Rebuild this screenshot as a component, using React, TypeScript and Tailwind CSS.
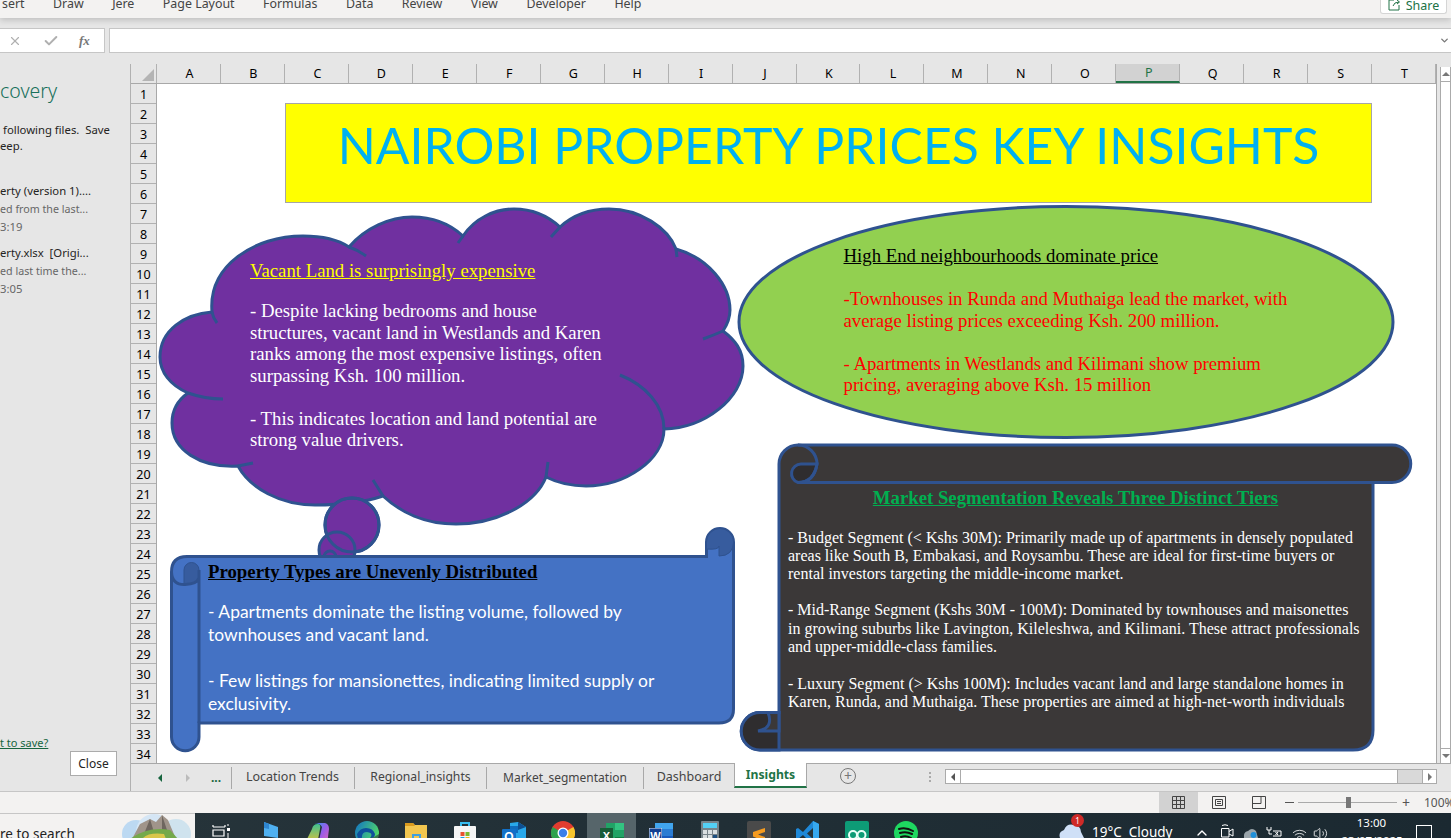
import { X, Check, ChevronDown, ChevronUp, Volume2, Wifi } from "lucide-react";

const ribbonTabs = ["sert", "Draw", "Jere", "Page Layout", "Formulas", "Data", "Review", "View", "Developer", "Help"];
const columns = "ABCDEFGHIJKLMNOPQRST".split("");
const rows = Array.from({ length: 34 }, (_, i) => i + 1);

function Cloud() {
  return (
    <g fill="#7030a0" stroke="#2f528f" strokeWidth="3">
      <path d="M212 312 C208 265 255 236 303 236 C320 236 337 239 349 247 C365 228 390 217 412 217 C432 217 450 224 463 236 C475 218 495 209 514 209 C532 209 548 216 560 227 C573 215 590 209 609 209 C640 209 668 228 676 249 C708 258 730 285 730 310 C730 318 727 325 723 331 C735 340 743 350 743 366 C743 398 705 428 664 429 C664 460 625 486 586 486 C570 486 556 482 546 477 C535 505 495 524 456 524 C425 524 400 512 383 496 C362 503 338 505 315 505 C280 505 250 488 238 466 C200 468 172 450 172 423 C172 410 178 400 188 393 C170 385 160 372 160 357 C160 330 185 314 212 312 Z" />
      <path
        fill="none"
        d="M212 312 Q213 318 217 323 M349 247 Q358 250 366 256 M463 236 L458 243 M560 227 L551 237 M676 249 L677 257 M723 331 Q714 335 703 339 M664 429 C664 405 645 385 620 375 M546 477 L548 462 M383 496 L373 480 M238 466 L253 463 M188 393 Q205 399 223 399"
      />
      <circle cx="352" cy="525" r="27" />
      <circle cx="337" cy="550" r="18" />
      <circle cx="352" cy="525" r="27" fill="none" />
      <circle cx="330" cy="557" r="6" />
    </g>
  );
}

function BlueScroll() {
  return (
    <g stroke="#2f528f" strokeWidth="3">
      <path
        fill="#4472c4"
        d="M171.500 572 Q171.500 556.500 187 556.500 L706.500 556.500 L706.500 542 A13.500 13.500 0 0 1 733.500 542 L733.500 709 Q733.500 723 719 723 L199 723 L199 737 A13.750 13.750 0 0 1 171.500 737 Z"
      />
      <path fill="#375c9e" strokeWidth="1" d="M706.500 549 L706.500 542 A13.500 13.500 0 0 1 733.500 542 Q733 556 719 556 L719 546 Q719 550 706.500 549 Z" />
      <path fill="#375c9e" strokeWidth="1" d="M199 578 L199 570 A7.500 7.500 0 0 0 184 570 L184 584.500 Q197 584 199 578 Z" />
      <path fill="none" d="M171.500 572 Q172 585 185 584.500 Q197 584 199 578 M199 570 L199 723" />
    </g>
  );
}

function DarkScroll() {
  return (
    <g stroke="#2f528f" strokeWidth="3">
      <path
        fill="#3b3838"
        d="M779 464 A19 19 0 0 1 798 445 L1392 445 A18.750 18.750 0 0 1 1392 482.500 L1373 482.500 L1373 730 Q1373 750 1353 750 L760 750 A18.750 18.750 0 0 1 760 712.500 L779 712.500 Z"
      />
      <path fill="#2f2d2f" d="M817 464 L801 464 A9.500 9.500 0 0 0 798 482.500 Q814 482.500 817 464 Z" />
      <path fill="none" d="M798 445 A19 19 0 0 1 817 464 Q814 482.500 798 482.500 L1373 482.500" />
      <path fill="#2f2d2f" d="M779 712.500 L760 712.500 A18.750 18.750 0 0 0 760 750 L779 750 Z" />
      <path fill="#3b3838" d="M768 712.500 L779 712.500 L779 731 L758 731 Q774 728 768 712.500 Z" />
    </g>
  );
}

function TaskIcon({ children, active }: { children: React.ReactNode; active?: boolean }) {
  return (
    <div className={`flex h-full w-[49px] justify-center pt-[8px] ${active ? "bg-[#56656a]" : ""}`}>
      <svg width="24" height="24" viewBox="0 0 24 24">
        {children}
      </svg>
    </div>
  );
}

export default function App() {
  return (
    <div className="flex h-[838px] w-[1451px] flex-col overflow-hidden bg-[#e6e6e6] font-['Noto_Sans',sans-serif] text-[12px] text-[#252423]">
      {/* ribbon, cut off at the top of the window */}
      <div className="relative z-10 flex h-[18px] shrink-0 justify-between bg-[#f3f2f1] shadow-[0_2px_6px_rgba(0,0,0,0.18)]">
        <div className="ml-[2px] flex -mt-[5px] h-[18px] gap-[28.500px] text-[12.400px] leading-[18px] text-[#444]">
          {ribbonTabs.map((t) => (
            <span key={t}>{t}</span>
          ))}
        </div>
        <div className="mr-[4px] flex h-[14px] w-[67px] items-end justify-center gap-[5px] rounded-b-[3px] border border-t-0 border-[#d5d5d5] bg-white text-[12.500px] leading-[18px] text-[#217346]">
          <svg width="13" height="12" viewBox="0 0 13 12" fill="none" stroke="#217346" className="mb-[2px]">
            <path d="M6 1H1V11H11V6M5 7Q6 3 11 3M9 1L11.500 3L9 5" />
          </svg>
          <span className="-mb-[1px] h-[13px] overflow-hidden leading-[9px]">Share</span>
        </div>
      </div>

      {/* formula bar */}
      <div className="flex h-[46px] shrink-0 items-start gap-[4px] pt-[10px]">
        <div className="flex h-[25px] w-[105px] items-center border border-l-0 border-[#c6c6c6] bg-white text-[#b0b0b0]">
          <X size={14} className="ml-[8px]" />
          <Check size={16} className="ml-[21px]" strokeWidth={3} />
          <span className="ml-[20px] font-['Liberation_Serif',serif] text-[13px] italic font-bold text-[#777]">fx</span>
        </div>
        <div className="flex h-[25px] flex-1 items-center justify-end border border-r-0 border-[#c6c6c6] bg-white pr-[1px]">
          <ChevronDown size={11} strokeWidth={3} className="text-[#777]" />
        </div>
      </div>

      <div className="flex min-h-0 flex-1">
        {/* recovery pane */}
        <div className="flex w-[131px] shrink-0 flex-col border-r border-[#b1b1b1] text-[11.300px] leading-[16px]">
          <div className="mt-[13px] h-[28px] text-[19.500px] font-light leading-[28px] text-[#17705b]">covery</div>
          <div className="mt-[17px] pl-[3px]">
            following files.&nbsp; Save
            <br />
            <span className="-ml-[3px]">eep.</span>
          </div>
          <div className="mt-[28px] leading-[18px]">
            <div>erty (version 1)....</div>
            <div className="text-[10.700px] text-[#666]">ed from the last...</div>
            <div className="text-[#666]">3:19</div>
          </div>
          <div className="mt-[8px] leading-[18px]">
            <div>erty.xlsx&nbsp; [Origi...</div>
            <div className="text-[10.700px] text-[#666]">ed last time the...</div>
            <div className="text-[#666]">3:05</div>
          </div>
          <div className="mt-auto text-[11px] leading-[14px] text-[#17653f] underline">t to save?</div>
          <div className="mb-[15px] ml-[70px] mt-[1px] flex h-[25px] w-[47px] items-center justify-center border border-[#ababab] bg-white text-[12px]">
            Close
          </div>
        </div>

        <div className="flex min-w-0 flex-1 flex-col">
          <div className="flex min-h-0 flex-1">
            <div className="flex w-[1306px] shrink-0 flex-col border-r border-[#a8a8a8]">
              {/* column headers */}
              <div className="flex h-[20px] shrink-0 border-b border-[#a8a8a8] text-[12.500px]">
                <div className="flex w-[26px] items-end justify-end border-r border-[#b1b1b1] p-[2px]">
                  <div className="h-0 w-0 border-b-[12px] border-l-[12px] border-b-[#b4b4b4] border-l-transparent" />
                </div>
                {columns.map((c) => (
                  <div
                    key={c}
                    className={
                      c === "P"
                        ? "flex w-[64px] items-center justify-center border-r border-b-2 border-[#b1b1b1] border-b-[#217346] bg-[#d2d2d2] pl-[2px] pt-[1px] text-[#217346]"
                        : "flex w-[64px] items-center justify-center border-r border-[#b1b1b1] pl-[2px] pt-[1px] text-black"
                    }
                  >
                    {c}
                  </div>
                ))}
              </div>
              <div className="flex min-h-0 flex-1">
                {/* row headers */}
                <div className="w-[26px] shrink-0 border-r border-[#a8a8a8] text-[12.500px] text-black">
                  {rows.map((r) => (
                    <div key={r} className="flex h-[20px] items-center justify-center border-b border-[#b1b1b1] pt-[3px]">
                      {r}
                    </div>
                  ))}
                </div>

                {/* sheet with its floating shapes */}
                <div className="relative flex-1 overflow-hidden bg-white">
                  <div className="absolute left-[128px] top-[19px] flex h-[100px] w-[1087px] items-center justify-center border border-[#a6a6a6] bg-[#ffff00] pb-[16px] font-['Lato',sans-serif] text-[49.900px] leading-[60px] text-[#00b0f0]">
                    NAIROBI PROPERTY PRICES KEY INSIGHTS
                  </div>
                  <svg className="absolute left-0 top-0" width="1280" height="680" viewBox="157 84 1280 680">
                    <Cloud />
                    <ellipse cx="1066" cy="322" rx="327" ry="115.500" fill="#92d050" stroke="#2f528f" strokeWidth="3" />
                    <BlueScroll />
                    <DarkScroll />
                  </svg>

                  <div className="absolute left-[93px] top-[176px] whitespace-nowrap font-['Liberation_Serif',serif] text-[18.750px] leading-[21.400px] text-white">
                    <p className="mb-[19px] text-[#ffff00] underline">Vacant Land is surprisingly expensive</p>
                    <p>
                      - Despite lacking bedrooms and house
                      <br />
                      structures, vacant land in Westlands and Karen
                      <br />
                      ranks among the most expensive listings, often
                      <br />
                      surpassing Ksh. 100 million.
                    </p>
                    <p className="mt-[21.500px]">
                      - This indicates location and land potential are
                      <br />
                      strong value drivers.
                    </p>
                  </div>

                  <div className="absolute left-[686.500px] top-[161px] whitespace-nowrap font-['Liberation_Serif',serif] text-[18.750px] leading-[21.500px] text-[#ff0000]">
                    <p className="mb-[21.500px] text-black underline">High End neighbourhoods dominate price</p>
                    <p>
                      -Townhouses in Runda and Muthaiga lead the market, with
                      <br />
                      average listing prices exceeding Ksh. 200 million.
                    </p>
                    <p className="mt-[21.500px]">
                      - Apartments in Westlands and Kilimani show premium
                      <br />
                      pricing, averaging above Ksh. 15 million
                    </p>
                  </div>

                  <div className="absolute left-[51px] top-[477px] whitespace-nowrap text-white">
                    <p className="mb-[18px] font-['Liberation_Serif',serif] text-[18.800px] font-bold leading-[22px] text-black underline">
                      Property Types are Unevenly Distributed
                    </p>
                    <div className="font-['Lato',sans-serif] text-[17.450px] leading-[22.700px]">
                      <p>
                        - Apartments dominate the listing volume, followed by
                        <br />
                        townhouses and vacant land.
                      </p>
                      <p className="mt-[23.500px]">
                        - Few listings for mansionettes, indicating limited supply or
                        <br />
                        exclusivity.
                      </p>
                    </div>
                  </div>

                  <div className="absolute left-[631px] top-[403px] w-[575px] whitespace-nowrap font-['Liberation_Serif',serif] text-[16px] leading-[18.400px] text-white">
                    <p className="mb-[19.500px] text-center text-[18.750px] font-bold leading-[22px] text-[#00b050] underline">
                      Market Segmentation Reveals Three Distinct Tiers
                    </p>
                    <p>
                      - Budget Segment (&lt; Kshs 30M): Primarily made up of apartments in densely populated
                      <br />
                      areas like South B, Embakasi, and Roysambu. These are ideal for first-time buyers or
                      <br />
                      rental investors targeting the middle-income market.
                    </p>
                    <p className="mt-[17.500px]">
                      - Mid-Range Segment (Kshs 30M - 100M): Dominated by townhouses and maisonettes
                      <br />
                      in growing suburbs like Lavington, Kileleshwa, and Kilimani. These attract professionals
                      <br />
                      and upper-middle-class families.
                    </p>
                    <p className="mt-[18.400px]">
                      - Luxury Segment (&gt; Kshs 100M): Includes vacant land and large standalone homes in
                      <br />
                      Karen, Runda, and Muthaiga. These properties are aimed at high-net-worth individuals
                    </p>
                  </div>
                </div>
              </div>
            </div>

            {/* vertical scrollbar */}
            <div className="ml-[3px] mt-[3px] flex flex-1 flex-col justify-between border-x border-[#ababab] bg-white">
              <div className="flex h-[15px] items-center justify-center border-b border-[#ababab]">
                <div className="h-0 w-0 border-x-[4px] border-b-[4px] border-x-transparent border-b-[#777]" />
              </div>
              <div className="flex h-[15px] items-center justify-center border-t border-[#ababab]">
                <div className="h-0 w-0 border-x-[4px] border-t-[4px] border-x-transparent border-t-[#777]" />
              </div>
            </div>
          </div>

          {/* sheet tabs */}
          <div className="flex h-[28px] shrink-0 border-t border-[#a8a8a8] text-[12.500px] text-[#444]">
            <div className="mt-[3px] flex h-[22px] w-[101px] shrink-0 items-center border-r border-[#a8a8a8]">
              <div className="ml-[27px] h-0 w-0 border-y-[4px] border-r-[4px] border-y-transparent border-r-[#17653f]" />
              <div className="ml-[24px] h-0 w-0 border-y-[4px] border-l-[4px] border-y-transparent border-l-[#bbb]" />
              <div className="ml-[21px] text-[12px] font-bold leading-[16px] text-[#17653f]">...</div>
            </div>
            <div className="mt-[3px] flex h-[22px] w-[123px] items-center justify-center border-r border-[#a8a8a8] pb-[1px] pr-[1px]">Location Trends</div>
            <div className="mt-[3px] flex h-[22px] w-[132px] items-center justify-center border-r border-[#a8a8a8] pb-[1px] text-[12.200px]">Regional_insights</div>
            <div className="mt-[3px] flex h-[22px] w-[157px] items-center justify-center border-r border-[#a8a8a8] pb-[1px] text-[12px]">Market_segmentation</div>
            <div className="mt-[3px] flex h-[22px] w-[90px] items-center justify-center pb-[1px]">Dashboard</div>
            <div className="-mt-px flex h-[25px] w-[73px] items-center justify-center border-x border-b-2 border-x-[#a8a8a8] border-b-[#217346] bg-white pt-[2px] text-[12.200px] font-bold text-[#217346]">
              Insights
            </div>
            <div className="ml-[33px] mt-[4px] flex h-[16px] w-[16px] items-center justify-center rounded-full border border-[#777] text-[14px] leading-none text-[#777]">
              +
            </div>
            <div className="ml-[73px] mt-[8px] h-[10px] border-l-2 border-dotted border-[#aaa]" />
            <div className="ml-[14px] mt-[5px] flex h-[15px] w-[492px] border border-[#ababab] bg-[#d9d9d9]">
              <div className="flex w-[15px] items-center justify-center border-r border-[#ababab] bg-white">
                <div className="h-0 w-0 border-y-[4px] border-r-[4px] border-y-transparent border-r-[#555]" />
              </div>
              <div className="w-[437px] border-r border-[#ababab] bg-white" />
              <div className="flex-1" />
              <div className="flex w-[14px] items-center justify-center border-l border-[#ababab] bg-white">
                <div className="h-0 w-0 border-y-[4px] border-l-[4px] border-y-transparent border-l-[#777]" />
              </div>
            </div>
          </div>
        </div>
      </div>

      {/* status bar */}
      <div className="flex h-[22px] shrink-0 items-center border-t border-[#c6c6c6] bg-[#f3f2f1] text-[#555]">
        <div className="ml-[1159px] flex h-full w-[39px] items-center justify-center bg-[#d2d2d2]">
          <svg width="13" height="13" viewBox="0 0 13 13" fill="none" stroke="#444">
            <path d="M.5 .5H12.500V12.500H.5ZM.5 4.500H12.500M.5 8.500H12.500M4.500 .5V12.500M8.500 .5V12.500" />
          </svg>
        </div>
        <div className="flex w-[42px] justify-center">
          <svg width="14" height="13" viewBox="0 0 14 13" fill="none" stroke="#444">
            <path d="M.5 .5H13.500V12.500H.5ZM3.500 3.500H10.500V9.500H3.500ZM5 5.500H9M5 7.500H9" />
          </svg>
        </div>
        <div className="flex w-[38px] justify-center">
          <svg width="14" height="13" viewBox="0 0 14 13" fill="none" stroke="#444">
            <path d="M.5 .5H13.500V12.500H.5ZM.5 7.500H9V.5" />
          </svg>
        </div>
        <div className="ml-[7px] h-px w-[9px] bg-[#555]" />
        <div className="relative ml-[4px] h-px w-[99px] bg-[#aaa]">
          <div className="absolute left-[48px] -top-[5px] h-[11px] w-[5px] bg-[#777]" />
        </div>
        <div className="ml-[5px] w-[9px] text-[14px] leading-none">+</div>
        <div className="ml-[13px] w-[27px] overflow-hidden whitespace-nowrap text-[12px]">100%</div>
      </div>

      {/* windows taskbar */}
      <div className="flex h-[25px] shrink-0 overflow-hidden bg-linear-to-r from-[#27353b] to-[#1b2931] text-white">
        <div className="relative flex w-[195px] shrink-0 overflow-hidden border-t border-[#c6c6c6] bg-[#f3f2f1] text-[13.500px] leading-[18px] text-[#222]">
          <span className="mt-[11px] whitespace-nowrap">re to search</span>
          <svg className="absolute left-[118px] top-0" width="74" height="25" viewBox="0 0 74 25">
            <circle cx="18" cy="20" r="14" fill="#bcd9f2" />
            <circle cx="36" cy="18" r="18" fill="#d5e6f5" />
            <circle cx="58" cy="20" r="15" fill="#cfe3ee" />
            <path d="M14 25L22 10L32 5L38 8L44 1L50 6L58 25Z" fill="#a0948a" />
            <path d="M32 5L38 25H24ZM44 1L52 25H44Z" fill="#6f665f" />
            <path d="M12 25Q30 12 52 16L60 25Z" fill="#74a94a" />
            <path d="M24 25Q30 18 46 20L48 25Z" fill="#d9c64a" />
          </svg>
        </div>
        <TaskIcon>
          <path d="M5 6H17M5 4V6M17 4V6M5 9H16V15H5ZM5 19V24M16 19V24M5 18H16" fill="none" stroke="#fff" strokeWidth="1.200" />
          <rect x="19" y="7" width="3" height="3" fill="#fff" />
          <path d="M20 3V5M20 12V17M20 20V24" stroke="#fff" strokeWidth="1" />
        </TaskIcon>
        <TaskIcon>
          <path d="M7 1L21 6V17L7 15Z" fill="#4fb0f0" />
          <path d="M7 1L12 3V8L7 7Z" fill="#2f86d0" />
          <circle cx="8" cy="20" r="3" fill="#9a9a9a" />
          <circle cx="16" cy="20" r="3" fill="#777" />
        </TaskIcon>
        <TaskIcon>
          <defs>
            <linearGradient id="cop" x1="0" y1="0" x2="1" y2="1">
              <stop offset="0" stopColor="#2e9bf0" />
              <stop offset="0.5" stopColor="#9a5ce8" />
              <stop offset="1" stopColor="#e86ab0" />
            </linearGradient>
            <linearGradient id="cop2" x1="0" y1="1" x2="0" y2="0">
              <stop offset="0" stopColor="#f0c030" />
              <stop offset="1" stopColor="#40c090" />
            </linearGradient>
          </defs>
          <path d="M8 2H19Q23 3 23 8L21 24H12L16 6Q14 2 8 2Z" fill="url(#cop)" />
          <path d="M6 8Q7 3 12 3Q15 3 14 8L11 24H2Q0 22 1 18Z" fill="url(#cop2)" />
        </TaskIcon>
        <TaskIcon>
          <defs>
            <linearGradient id="edge" x1="0" y1="0" x2="1" y2="0.500">
              <stop offset="0" stopColor="#1070c8" />
              <stop offset="1" stopColor="#50d868" />
            </linearGradient>
          </defs>
          <circle cx="12" cy="12" r="12" fill="url(#edge)" />
          <path d="M2 13Q5 7 11 7Q18 7 20 13Q20 17 15 17Q19 12 12 11Q6 11 7 18Q8 22 12 24Q3 23 2 13Z" fill="#0e4f9c" />
          <path d="M15 17Q20 16 24 13V24H12Q10 20 15 17Z" fill="#27353b" opacity="0.600" />
        </TaskIcon>
        <TaskIcon>
          <path d="M1 2H9L11 4H23V24H1Z" fill="#f2c64f" />
          <path d="M1 2H9L11 5H1Z" fill="#d99a1e" />
          <rect x="8" y="13" width="9" height="9" fill="#3f9fe0" />
          <rect x="10" y="15" width="5" height="5" fill="#f2c64f" />
        </TaskIcon>
        <TaskIcon>
          <path d="M8 5V2H16V5" fill="none" stroke="#38bdf0" strokeWidth="2" />
          <rect x="1" y="5" width="22" height="19" rx="1" fill="#f5f5f5" />
          <rect x="7.500" y="11" width="4" height="4" fill="#e8512f" />
          <rect x="12.500" y="11" width="4" height="4" fill="#7cb82f" />
          <rect x="7.500" y="16" width="4" height="4" fill="#1f9be8" />
          <rect x="12.500" y="16" width="4" height="4" fill="#f5b50f" />
        </TaskIcon>
        <TaskIcon>
          <path d="M8 2L16 1L24 6V20H8Z" fill="#28a8ea" />
          <path d="M16 1V9L24 6Z" fill="#0f4f90" />
          <path d="M8 5H16V12H8Z" fill="#0f6cbd" />
          <rect x="0" y="8" width="14" height="15" rx="1" fill="#1170c8" />
          <text x="7" y="20" textAnchor="middle" fontSize="12" fontWeight="bold" fill="#fff" fontFamily="Liberation Sans">O</text>
        </TaskIcon>
        <TaskIcon>
          <circle cx="12" cy="12" r="12" fill="#e23c2f" />
          <path d="M12 12L22.400 6A12 12 0 0 1 12 24Z" fill="#f7c52d" />
          <path d="M12 12L12 24A12 12 0 0 1 1.600 6Z" fill="#2ca24c" />
          <circle cx="12" cy="12" r="5.500" fill="#fff" />
          <circle cx="12" cy="12" r="4.200" fill="#3a7fe8" />
        </TaskIcon>
        <TaskIcon active>
          <rect x="6" y="2" width="18" height="22" fill="#21a366" />
          <rect x="15" y="2" width="9" height="7" fill="#33c481" />
          <rect x="15" y="16" width="9" height="8" fill="#107c41" />
          <rect x="0" y="7" width="13" height="15" fill="#185c37" />
          <text x="6.500" y="19" textAnchor="middle" fontSize="11" fontWeight="bold" fill="#fff" fontFamily="Liberation Sans">X</text>
        </TaskIcon>
        <TaskIcon>
          <rect x="6" y="2" width="18" height="22" fill="#2b7cd3" />
          <rect x="6" y="2" width="18" height="6" fill="#41a5ee" />
          <rect x="6" y="15" width="18" height="9" fill="#185abd" />
          <rect x="0" y="7" width="13" height="15" fill="#e8eef8" />
          <rect x="0.500" y="7.500" width="12" height="14" fill="#103f91" />
          <text x="6.500" y="19" textAnchor="middle" fontSize="11" fontWeight="bold" fill="#fff" fontFamily="Liberation Sans">W</text>
        </TaskIcon>
        <TaskIcon>
          <rect x="3" y="0" width="18" height="25" rx="1" fill="#77838a" />
          <rect x="5" y="2" width="14" height="5" fill="#53d0f5" />
          <path d="M5 9H9V13H5ZM10 9H14V13H10ZM15 9H19V13H15ZM5 14H9V18H5ZM10 14H14V18H10ZM5 19H9V24H5ZM10 19H14V24H10Z" fill="#d9dfe2" />
          <rect x="15" y="14" width="4" height="10" fill="#1c4e80" />
        </TaskIcon>
        <TaskIcon>
          <rect x="0" y="0" width="24" height="25" rx="2" fill="#4a4a4a" />
          <path d="M6 11L18 7V11L11 13.500L18 16V20L6 24V20L12 18L6 15.500Z" fill="#f59b20" />
        </TaskIcon>
        <TaskIcon>
          <path d="M17 0L23 3V21L17 24L7 14L2 18L0 17V8L2 7L7 11Z" fill="#1e88d8" />
          <path d="M17 7L11 12.500L17 18Z" fill="#27353b" />
          <path d="M17 0L23 3V21L17 24Z" fill="#36a8ef" />
        </TaskIcon>
        <TaskIcon>
          <rect x="0" y="0" width="24" height="25" rx="2" fill="#0d9b76" />
          <circle cx="8" cy="14" r="4" fill="none" stroke="#e8fff7" strokeWidth="2" />
          <circle cx="16.500" cy="14" r="4" fill="none" stroke="#e8fff7" strokeWidth="2" />
        </TaskIcon>
        <TaskIcon>
          <circle cx="12" cy="12" r="12" fill="#1ed760" />
          <path d="M5 8Q12 6 19 10M6 12Q12 10 18 13M7 16Q12 14 17 17" fill="none" stroke="#111" strokeWidth="2" strokeLinecap="round" />
        </TaskIcon>

        {/* tray */}
        <div className="relative ml-[129px] flex h-full flex-1 items-start">
          <svg className="mt-[10px]" width="25" height="15" viewBox="0 0 25 15">
            <path d="M1 15Q-1 9 5 7Q8 0 15 2Q22 3 22 9L25 15Z" fill="#cfe0f7" />
          </svg>
          <div className="absolute left-[12px] top-[8px] flex h-[13px] w-[13px] -translate-y-[7px] items-center justify-center rounded-full bg-[#cf2a27] text-[8px] leading-none">1</div>
          <span className="ml-[8px] mt-[9px] whitespace-nowrap text-[13.500px] leading-[20px]">19°C&nbsp; Cloudy</span>
          <ChevronUp size={16} className="ml-[21px] mt-[12px]" />
          <svg className="ml-[10px] mt-[11px]" width="14" height="14" viewBox="0 0 14 14" fill="none" stroke="#fff">
            <path d="M2 1.500Q5 0 8 1.500M1.500 4.500H9V13H1.500ZM9 7.500L13 5V12L9 10" />
          </svg>
          <svg className="ml-[9px] mt-[14px]" width="15" height="11" viewBox="0 0 15 11">
            <path d="M1 11Q0 5 5 4Q9 0 13 4L15 11Z" fill="#9aa5ab" />
            <circle cx="10.500" cy="8" r="3" fill="#1f8fd8" />
          </svg>
          <svg className="ml-[8px] mt-[13px]" width="16" height="12" viewBox="0 0 16 12" fill="none" stroke="#fff">
            <path d="M1 1V4H5V1M3 4V8H6M7 5H15V10H7M9.500 6L12 9M12 6L9.500 9" />
          </svg>
          <Wifi size={15} className="ml-[10px] mt-[14px]" strokeWidth={1.300} />
          <Volume2 size={15} className="ml-[6px] mt-[13px]" strokeWidth={1.300} />
          <div className="ml-[14px] mt-[1px] w-[60px] text-center text-[11.500px] leading-[18px]">
            13:00
            <br />
            23/07/2025
          </div>
          <div className="ml-[14px] mt-[12px] h-[20px] w-[16px] border border-white" />
        </div>
      </div>
    </div>
  );
}
